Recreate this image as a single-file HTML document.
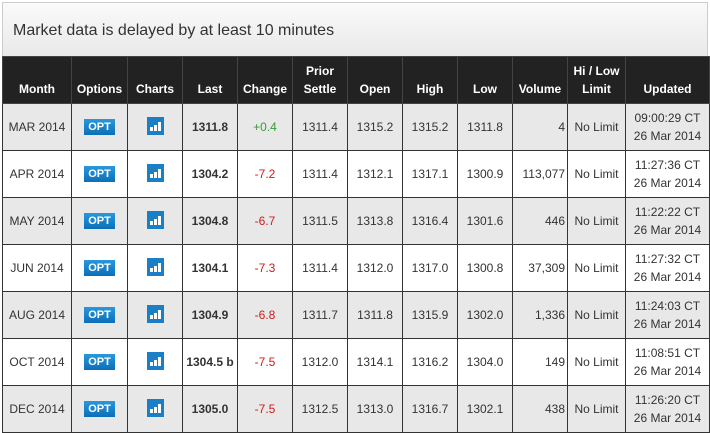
<!DOCTYPE html>
<html><head><style>
body{margin:0;width:710px;height:433px;background:#fff;font-family:"Liberation Sans",Arial,sans-serif;overflow:hidden;position:relative}
.title{position:absolute;left:2px;top:2px;width:704px;height:53px;border:1px solid #ccc;border-bottom:none;background:linear-gradient(#fafafa,#e9e9e9);}
.title span{position:absolute;left:10px;top:19px;font-size:16px;color:#333}
table{position:absolute;left:2px;top:56px;border-collapse:collapse;table-layout:fixed;width:707px}
td,th{border:1px solid #333;padding:0;text-align:center;font-size:12px;color:#333}
th{background:#222;color:#fff;font-weight:bold;height:47px;padding-top:18px;box-sizing:border-box;vertical-align:middle;line-height:18px;border-color:#444}
th.two{padding-top:0}
tr.r td{height:46px}
tr.o td{background:#e8e8e8}
td.b{font-weight:bold}
td.g{color:#3a9a3a}
td.rd{color:#d31a1a}
td.v{text-align:right;padding-right:2px}
td.u{line-height:18px}
.opt{display:inline-block;width:31px;height:16px;background:linear-gradient(#2a97dc,#0b6fb8);color:#fff;font-weight:bold;font-size:11px;line-height:16px;margin-top:-6px}
.ch{display:inline-block;width:17px;height:18px;background:#1a7fc4;position:relative;margin-top:-2px;vertical-align:middle}
.ch i{position:absolute;bottom:4px;width:3px;background:#fff}
</style></head><body>
<div class="title"><span>Market data is delayed by at least 10 minutes</span></div>
<table>
<colgroup><col style="width:69px"><col style="width:56px"><col style="width:55px"><col style="width:55px"><col style="width:55px"><col style="width:55px"><col style="width:55px"><col style="width:55px"><col style="width:55px"><col style="width:55px"><col style="width:58px"><col style="width:84px"></colgroup>
<tr><th>Month</th><th>Options</th><th>Charts</th><th>Last</th><th>Change</th><th class="two">Prior<br>Settle</th><th>Open</th><th>High</th><th>Low</th><th>Volume</th><th class="two">Hi / Low<br>Limit</th><th>Updated</th></tr>
<tr class="r o"><td>MAR 2014</td><td><span class="opt">OPT</span></td><td><span class="ch"><i style="left:3px;height:4px"></i><i style="left:7px;height:6px"></i><i style="left:11px;height:9px"></i></span></td><td class="b">1311.8</td><td class="g">+0.4</td><td>1311.4</td><td>1315.2</td><td>1315.2</td><td>1311.8</td><td class="v">4</td><td>No Limit</td><td class="u">09:00:29 CT<br>26 Mar 2014</td></tr>
<tr class="r"><td>APR 2014</td><td><span class="opt">OPT</span></td><td><span class="ch"><i style="left:3px;height:4px"></i><i style="left:7px;height:6px"></i><i style="left:11px;height:9px"></i></span></td><td class="b">1304.2</td><td class="rd">-7.2</td><td>1311.4</td><td>1312.1</td><td>1317.1</td><td>1300.9</td><td class="v">113,077</td><td>No Limit</td><td class="u">11:27:36 CT<br>26 Mar 2014</td></tr>
<tr class="r o"><td>MAY 2014</td><td><span class="opt">OPT</span></td><td><span class="ch"><i style="left:3px;height:4px"></i><i style="left:7px;height:6px"></i><i style="left:11px;height:9px"></i></span></td><td class="b">1304.8</td><td class="rd">-6.7</td><td>1311.5</td><td>1313.8</td><td>1316.4</td><td>1301.6</td><td class="v">446</td><td>No Limit</td><td class="u">11:22:22 CT<br>26 Mar 2014</td></tr>
<tr class="r"><td>JUN 2014</td><td><span class="opt">OPT</span></td><td><span class="ch"><i style="left:3px;height:4px"></i><i style="left:7px;height:6px"></i><i style="left:11px;height:9px"></i></span></td><td class="b">1304.1</td><td class="rd">-7.3</td><td>1311.4</td><td>1312.0</td><td>1317.0</td><td>1300.8</td><td class="v">37,309</td><td>No Limit</td><td class="u">11:27:32 CT<br>26 Mar 2014</td></tr>
<tr class="r o"><td>AUG 2014</td><td><span class="opt">OPT</span></td><td><span class="ch"><i style="left:3px;height:4px"></i><i style="left:7px;height:6px"></i><i style="left:11px;height:9px"></i></span></td><td class="b">1304.9</td><td class="rd">-6.8</td><td>1311.7</td><td>1311.8</td><td>1315.9</td><td>1302.0</td><td class="v">1,336</td><td>No Limit</td><td class="u">11:24:03 CT<br>26 Mar 2014</td></tr>
<tr class="r"><td>OCT 2014</td><td><span class="opt">OPT</span></td><td><span class="ch"><i style="left:3px;height:4px"></i><i style="left:7px;height:6px"></i><i style="left:11px;height:9px"></i></span></td><td class="b">1304.5 b</td><td class="rd">-7.5</td><td>1312.0</td><td>1314.1</td><td>1316.2</td><td>1304.0</td><td class="v">149</td><td>No Limit</td><td class="u">11:08:51 CT<br>26 Mar 2014</td></tr>
<tr class="r o"><td>DEC 2014</td><td><span class="opt">OPT</span></td><td><span class="ch"><i style="left:3px;height:4px"></i><i style="left:7px;height:6px"></i><i style="left:11px;height:9px"></i></span></td><td class="b">1305.0</td><td class="rd">-7.5</td><td>1312.5</td><td>1313.0</td><td>1316.7</td><td>1302.1</td><td class="v">438</td><td>No Limit</td><td class="u">11:26:20 CT<br>26 Mar 2014</td></tr>
</table>
</body></html>
